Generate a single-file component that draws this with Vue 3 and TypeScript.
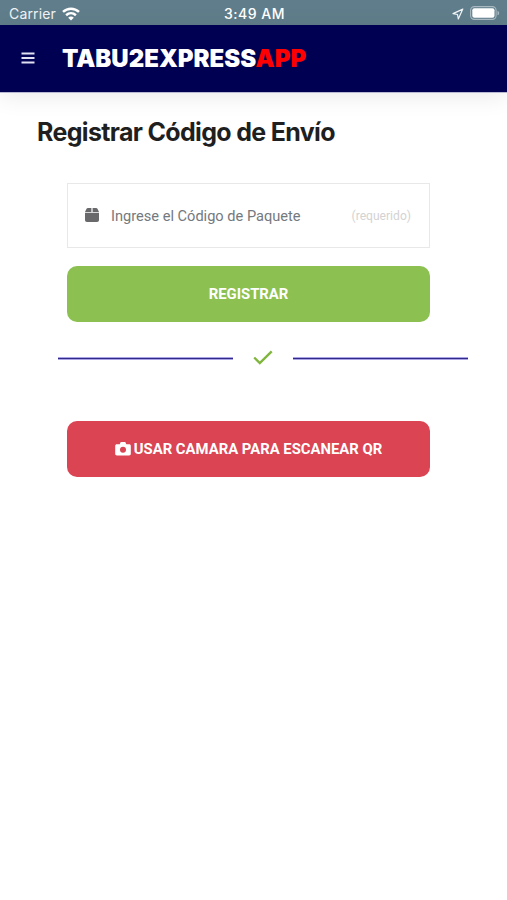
<script setup lang="ts">
import { ref } from 'vue'

const code = ref<string>('')
</script>

<template>
  <div class="screen">
    <div class="status">
      <div class="carrier">
        <span>Carrier</span>
        <svg class="wifi" viewBox="0 0 18 14" fill="none" stroke="#fff" stroke-width="2.5">
          <path d="M1 4.9C5.6.6 12.4.6 17 4.9" />
          <path d="M4.1 8.2C7 5.6 11 5.6 13.9 8.2" />
          <path d="M9 13.6 6.2 10.7C7.8 9.2 10.2 9.2 11.8 10.7Z" fill="#fff" stroke="none" />
        </svg>
      </div>
      <span class="time">3:49 AM</span>
      <div class="indicators">
        <svg class="location" viewBox="0 0 12 12" fill="none" stroke="#f0f4f6" stroke-width="1.2" stroke-linejoin="round">
          <path d="M10.8 1.1 1 5.6 5.5 6.5 6.3 10.9Z" />
        </svg>
        <svg class="battery" viewBox="0 0 30 14">
          <rect x=".6" y=".6" width="25.5" height="12.8" rx="3.8" fill="none" stroke="#a9b9c1" stroke-width="1.1" />
          <rect x="2.3" y="2.3" width="22.2" height="9.4" rx="2" fill="#fff" />
          <path d="M27.5 4.7c2.2.8 2.2 3.8 0 4.6Z" fill="#a9b9c1" />
        </svg>
      </div>
    </div>

    <header class="header">
      <button class="menu" type="button" aria-label="Menú">
        <svg viewBox="0 0 14 12" fill="none" stroke="#e0e0f2" stroke-width="1.9">
          <path d="M.5 1.5H13.5M.5 6H13.5M.5 10.5H13.5" />
        </svg>
      </button>
      <div class="brand">TABU2EXPRESS<span>APP</span></div>
    </header>

    <main class="content">
      <h1 class="title">Registrar Código de Envío</h1>
      <form class="form" @submit.prevent>
        <label class="field">
          <svg class="box" viewBox="0 0 14 14" fill="#69696b">
            <path d="M3 0H6.4V3.9H0L1.4.9C1.7.3 2.2 0 3 0ZM7.6 0H11C11.8 0 12.3.3 12.6.9L14 3.9H7.6ZM0 4.8H14V12C14 13.2 13.3 14 12 14H2C.7 14 0 13.2 0 12Z" />
          </svg>
          <input v-model="code" type="text" placeholder="Ingrese el Código de Paquete" />
          <em>(requerido)</em>
        </label>
        <button class="button register" type="submit">REGISTRAR</button>
      </form>
      <div class="divider">
        <i></i>
        <svg viewBox="0 0 20 15" fill="none" stroke="#80b63d" stroke-width="2.4">
          <path d="M1.2 7.5 6.8 13 18.7 1.3" />
        </svg>
        <i></i>
      </div>
      <button class="button scan" type="button">
        <svg viewBox="0 0 16 14" fill="#fff">
          <path fill-rule="evenodd" d="M5.4.5 4.7 2.3H2C.8 2.3.2 2.9.2 4V11.7C.2 12.8.8 13.4 2 13.4H14C15.2 13.4 15.8 12.8 15.8 11.7V4C15.8 2.9 15.2 2.3 14 2.3H11.3L10.6.5C10.5.2 10.2 0 9.8 0H6.2C5.8 0 5.5.2 5.4.5ZM8 4.7A3 3 0 1 1 8 10.7 3 3 0 0 1 8 4.7Z" />
        </svg>
        <span>USAR CAMARA PARA ESCANEAR QR</span>
      </button>
    </main>
  </div>
</template>

<style>
body {
  background: #fff;
}
</style>

<style scoped>
.screen {
  box-sizing: border-box;
  width: 100%;
  height: 900px;
  overflow: hidden;
  background: #fff;
  font-family: Roboto, sans-serif;
}
.status {
  display: grid;
  grid-template-columns: 1fr auto 1fr;
  align-items: center;
  height: 25px;
  padding: 2px 7px 0 9px;
  box-sizing: border-box;
  background: #607d8b;
  color: #fff;
  font: 14px/20px Inter, sans-serif;
}
.carrier {
  display: flex;
  align-items: center;
  gap: 6px;
  color: #eef2f4;
  letter-spacing: 0.15px;
}
.wifi {
  width: 18px;
  height: 14px;
}
.time {
  font-weight: 500;
  letter-spacing: 0.5px;
}
.indicators {
  display: flex;
  justify-content: flex-end;
  align-items: center;
  gap: 6px;
}
.location {
  width: 12px;
  height: 12px;
}
.battery {
  width: 30px;
  height: 14px;
  margin-top: -1px;
}
.header {
  display: flex;
  align-items: center;
  height: 67px;
  padding: 0 21px;
  box-sizing: border-box;
  background: #000052;
  box-shadow: 0 1px 0 #b9b9d2, 0 4px 24px rgba(0, 0, 0, 0.09);
}
.menu {
  display: flex;
  width: 14px;
  padding: 0 0 2px;
  border: 0;
  background: none;
}
.menu svg {
  width: 14px;
  height: 12px;
}
.brand {
  margin-left: 27px;
  color: #fff;
  font: 900 24px/36px Inter, sans-serif;
  letter-spacing: 0;
  white-space: nowrap;
}
.brand span {
  color: #f00;
}
.content {
  display: flex;
  flex-direction: column;
}
.title {
  margin: 22px 0 0 37px;
  color: #1f1f1f;
  font: 700 25px/36px Inter, sans-serif;
  letter-spacing: -0.67px;
  white-space: nowrap;
}
.form {
  display: flex;
  flex-direction: column;
  gap: 18px;
  margin: 33px 77px 0 67px;
}
.field {
  display: flex;
  align-items: center;
  height: 65px;
  padding: 0 18px 0 17px;
  box-sizing: border-box;
  border: 1px solid #e8e8e8;
}
.box {
  flex: none;
  width: 14px;
  height: 14px;
  margin: -2px 12px 0 0;
}
.field input {
  flex: 1;
  min-width: 0;
  padding: 0;
  border: 0;
  outline: 0;
  background: none;
  color: #6c757d;
  font: 14.6px/20px Roboto, sans-serif;
}
.field input::placeholder {
  color: #74797e;
  opacity: 1;
}
.field em {
  color: #d3d3d3;
  font: normal 12.1px/18px Roboto, sans-serif;
}
.button {
  display: flex;
  align-items: center;
  justify-content: center;
  height: 56px;
  padding: 0;
  border: 0;
  border-radius: 10px;
  color: #fff;
  font: 700 14.85px/20px Roboto, sans-serif;
}
.register {
  background: #8cc152;
}
.divider {
  display: flex;
  align-items: center;
  justify-content: space-between;
  height: 19px;
  margin: 27px 39px 0 58px;
}
.divider i {
  width: 175px;
  height: 1px;
  border: solid #a9a4e6;
  border-width: 1px 0;
  box-sizing: content-box;
  background: #322a86;
}
.divider svg {
  width: 20px;
  height: 15px;
  margin-top: -2px;
}
.scan {
  gap: 3px;
  margin: 53px 77px 0 67px;
  background: #da4453;
}
.scan svg {
  width: 16px;
  height: 14px;
}
</style>
